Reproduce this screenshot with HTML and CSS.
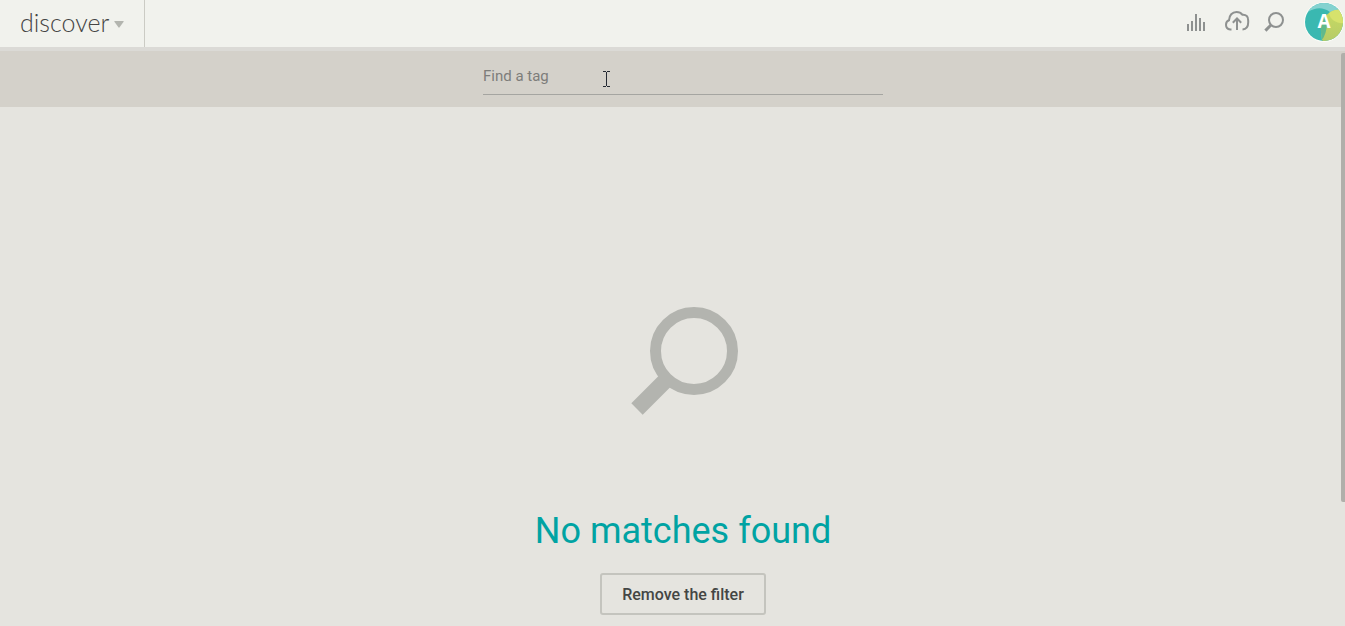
FILE: index.html
```html
<!DOCTYPE html>
<html lang="en">
<head>
<meta charset="utf-8">
<meta name="viewport" content="width=device-width, initial-scale=1">
<title>discover</title>
<link rel="stylesheet" href="styles.css">
</head>
<body>
<header class="topbar">
  <button class="brand" type="button" aria-haspopup="true">
    <span class="brand-name">discover</span>
    <svg class="brand-arrow" width="10" height="7" viewBox="0 0 10 7" aria-hidden="true"><path d="M.8 0h8.400Q10 0 9.600.8L5.600 6.300Q5 7 4.400 6.300L.4.8Q0 0 .8 0z"/></svg>
  </button>
  <nav class="tools" aria-label="Tools">
    <button class="tool" type="button" aria-label="Statistics">
      <svg width="20" height="24" viewBox="0 0 20 24"><path class="bars" d="M1 14h2v7H1zM5 11h2v10H5zM9 4h2v17H9zM13 8h2v13h-2zM17 12h2v9h-2z"/></svg>
    </button>
    <button class="tool" type="button" aria-label="Upload">
      <svg width="26" height="24" viewBox="0 0 26 24"><path class="line" d="M7.500 19.500H6.200C3.400 19.200 2 17.200 2 14.800c0-2.400 1.100-4 3-4.600C5.100 5.300 8.300 1.900 12.500 1.900c2.500 0 4.600 1 6 2.900 3.600-.3 5.900 1.900 5.600 5.300.2.8.1 1.400.1 2.400 0 4.200-1.600 6.700-5.700 7"/><path class="line" d="M13 20V9M8.800 12.800 13 8.500l4.200 4.300"/></svg>
    </button>
    <button class="tool" type="button" aria-label="Search">
      <svg width="22" height="24" viewBox="0 0 22 24"><circle class="line" cx="13" cy="10" r="7"/><path class="handle" d="M8 15 2.400 20.600"/></svg>
    </button>
    <button class="avatar" type="button" aria-label="Account">
      <svg width="40" height="40" viewBox="0 0 40 40">
        <defs>
          <clipPath id="disc"><circle cx="20" cy="20" r="19"/></clipPath>
          <linearGradient id="lime" x1="0" y1="0" x2="0" y2="1"><stop offset="0" stop-color="#c9db62"/><stop offset="1" stop-color="#b5cb68"/></linearGradient>
        </defs>
        <circle cx="20" cy="20" r="20" fill="#fbfcf8"/>
        <g clip-path="url(#disc)">
          <path d="M0 0h40v40H0z" fill="#3ab8b1"/>
          <path d="M40 7C29 6 18 13 17 25c0 6 1 11 1 15h22z" fill="url(#lime)"/>
          <path d="M5 0h35v8c-5-1-10 0-14 2C19 5 12 5 4 10z" fill="#84d2d0"/>
          <path d="M17 40c6-9 8-20 3-27-6 8-3 18-1 27z" fill="#61b98c"/>
          <path d="M25 11c5-4 11-4 16-1v11c-8 1-15-3-16-10z" fill="#d6e26c"/>
        </g>
        <text class="avatar-letter" x="20" y="26" text-anchor="middle">A</text>
      </svg>
    </button>
  </nav>
</header>
<div class="tagbar">
  <input class="tag-input" type="text" placeholder="Find a tag" aria-label="Find a tag">
  <svg class="cursor" width="7" height="16" viewBox="0 0 7 16" aria-hidden="true"><path d="M0 0h3v1h1V0h3v1H4v14h3v1H4v-1H3v1H0v-1h3V1H0z"/></svg>
</div>
<main class="empty">
  <svg class="empty-icon" width="108" height="110" viewBox="0 0 108 110" aria-hidden="true"><circle cx="63" cy="44" r="38.500"/><path d="M36 72 6 102"/></svg>
  <h1 class="empty-title">No matches found</h1>
  <button class="remove" type="button">Remove the filter</button>
</main>
<div class="scroll-thumb"></div>
</body>
</html>
```
FILE: styles.css
```css
* {
  box-sizing: border-box;
}

body {
  margin: 0;
  min-height: 100vh;
  overflow: hidden;
  background: #e5e4df;
  color: #444644;
  font-family: Roboto, "Liberation Sans", sans-serif;
}

button {
  margin: 0;
  padding: 0;
  border: 0;
  background: none;
  color: inherit;
  font: inherit;
}

.topbar {
  display: flex;
  justify-content: space-between;
  height: 51px;
  border-bottom: 4px solid #dbdad6;
  background: #f1f2ed;
}

.brand {
  display: flex;
  align-items: center;
  gap: 5px;
  padding: 0 20px;
  border-right: 1px solid #cbcbc4;
}

.brand-name {
  padding-bottom: 4px;
  color: #444;
  font-family: Lato, sans-serif;
  font-size: 25px;
  font-weight: 300;
  line-height: 32px;
}

.brand-arrow {
  margin-top: 2px;
  fill: #b3b5af;
}

.tools {
  display: flex;
  align-items: center;
  padding-bottom: 3px;
}

.tool {
  display: flex;
}

.tool:nth-child(1) {
  margin-right: 18px;
}

.tool:nth-child(2) {
  margin-right: 13px;
}

.tool:nth-child(3) {
  margin-right: 19px;
}

.bars {
  fill: #8e9190;
}

.line,
.handle {
  fill: none;
  stroke: #8e9190;
  stroke-width: 2;
}

.handle {
  stroke-width: 3;
}

.avatar {
  display: flex;
  margin-right: 1px;
}

.avatar-letter {
  fill: #fff;
  font-family: "Open Sans", sans-serif;
  font-size: 19px;
  font-weight: 700;
}

.tagbar {
  position: relative;
  display: flex;
  justify-content: center;
  height: 56px;
  padding: 0 0 12px 21px;
  background: #d4d1ca;
}

.tag-input {
  width: 400px;
  padding: 6px 0 0;
  border: 0;
  border-bottom: 1px solid #a5a5a1;
  border-radius: 0;
  outline: 0;
  background: transparent;
  color: #444644;
  font: 15px Roboto, sans-serif;
}

.tag-input::placeholder {
  color: #7d7d7a;
  opacity: 1;
}

.cursor {
  position: absolute;
  top: 20px;
  left: 603px;
  fill: #252a33;
}

.empty {
  display: flex;
  flex-direction: column;
  align-items: center;
  padding: 200px 0 11px 21px;
}

.empty-icon {
  margin-left: 3px;
  fill: none;
  stroke: #b3b4af;
  stroke-width: 11;
}

.empty-icon path {
  stroke-width: 16;
}

.empty-title {
  margin: 90px 0 18px;
  color: #00a3a3;
  font-size: 36px;
  font-weight: 400;
  line-height: 48px;
}

.remove {
  height: 42px;
  padding: 0 20px;
  border: 2px solid #c4c4be;
  border-radius: 3px;
  font-size: 16px;
  font-weight: 500;
}

.scroll-thumb {
  position: absolute;
  top: 53px;
  right: 0;
  width: 4px;
  height: 449px;
  border-radius: 2px 0 0 2px;
  background: #b0afaa;
}
```
